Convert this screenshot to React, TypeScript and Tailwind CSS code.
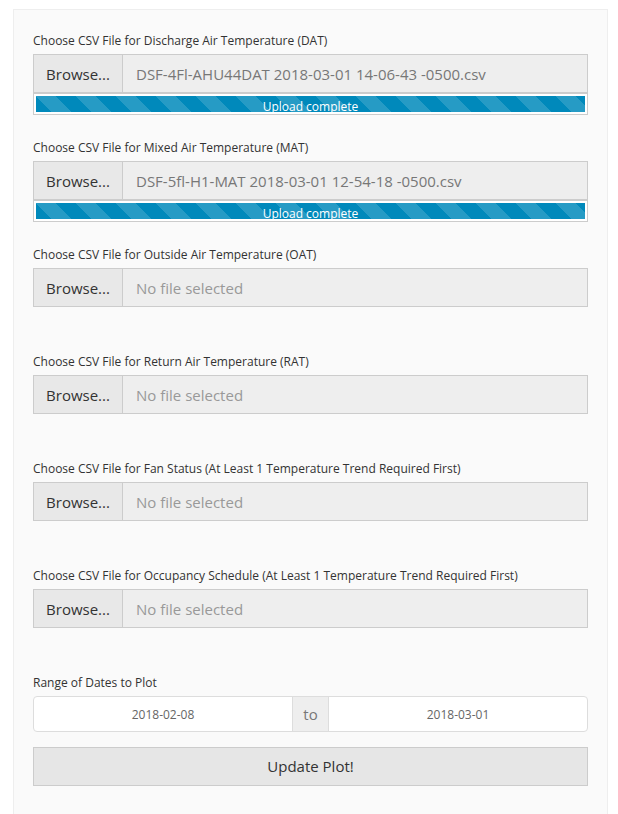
import React from "react";

const font = { fontFamily: '"Open Sans", "Liberation Sans", sans-serif' };

function Progress() {
  return (
    <div className="h-[22px] border border-[#ccc] bg-white p-[2px]">
      <div
        className="relative h-full w-full overflow-hidden bg-[#0089bb]"
        style={{
          backgroundImage:
            "linear-gradient(45deg, rgba(255,255,255,.15) 25%, transparent 25%, transparent 50%, rgba(255,255,255,.15) 50%, rgba(255,255,255,.15) 75%, transparent 75%, transparent)",
          backgroundSize: "40px 40px",
        }}
      >
        <div className="absolute inset-x-0 top-[2px] text-center text-[12px] leading-[18px] text-white">
          Upload complete
        </div>
      </div>
    </div>
  );
}

function FileBlock({ label, file }: { label: string; file?: string }) {
  return (
    <div className="h-[107px]">
      <div className="mb-[4px] h-[18px] text-[12px] leading-[18px] text-[#333]">{label}</div>
      <div className="flex h-[39px]">
        <div className="flex w-[90px] items-center justify-center border border-[#ccc] bg-[#e8e8e8] pt-[1px] text-[15px] text-[#333]">
          Browse...
        </div>
        <div
          className={
            "flex flex-1 items-center border border-l-0 border-[#ccc] bg-[#eee] pl-[13px] pt-[1px] text-[15px] " +
            (file ? "text-[#777]" : "text-[#999]")
          }
        >
          {file ?? "No file selected"}
        </div>
      </div>
      {file ? <Progress /> : null}
    </div>
  );
}

export default function App() {
  return (
    <div className="min-h-[814px] bg-white pl-[13px] pr-[10px] pt-[9px]" style={font}>
      <div className="min-h-[805px] border border-b-0 border-[#eee] bg-[#fafafa] px-[19px] pt-[22px]">
        <FileBlock
          label="Choose CSV File for Discharge Air Temperature (DAT)"
          file="DSF-4Fl-AHU44DAT 2018-03-01 14-06-43 -0500.csv"
        />
        <FileBlock
          label="Choose CSV File for Mixed Air Temperature (MAT)"
          file="DSF-5fl-H1-MAT 2018-03-01 12-54-18 -0500.csv"
        />
        <FileBlock label="Choose CSV File for Outside Air Temperature (OAT)" />
        <FileBlock label="Choose CSV File for Return Air Temperature (RAT)" />
        <FileBlock label="Choose CSV File for Fan Status (At Least 1 Temperature Trend Required First)" />
        <FileBlock label="Choose CSV File for Occupancy Schedule (At Least 1 Temperature Trend Required First)" />
        <div className="mb-[4px] h-[18px] text-[12px] leading-[18px] text-[#333]">Range of Dates to Plot</div>
        <div className="flex h-[36px] overflow-hidden rounded-[4px] border border-[#ddd] bg-white">
          <div className="flex flex-1 items-center justify-center pt-[1px] text-[12px] text-[#666]">2018-02-08</div>
          <div className="flex w-[37px] items-center justify-center border-x border-[#ddd] bg-[#eee] text-[15px] text-[#777]">
            to
          </div>
          <div className="flex flex-1 items-center justify-center pt-[1px] text-[12px] text-[#666]">2018-03-01</div>
        </div>
        <div className="mt-[15px] flex h-[39px] items-center justify-center border border-[#ccc] bg-[#e6e6e6] text-[15px] text-[#333]">
          Update Plot!
        </div>
      </div>
    </div>
  );
}
